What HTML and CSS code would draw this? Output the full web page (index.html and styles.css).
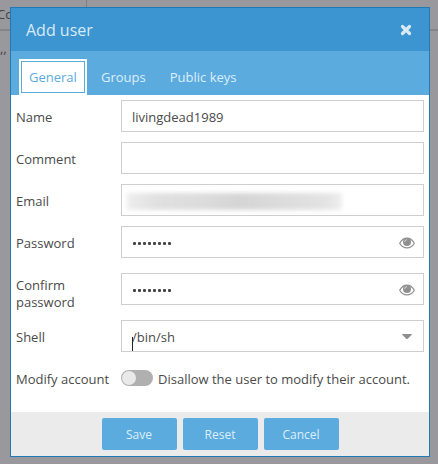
FILE: index.html
```html
<!DOCTYPE html>
<html lang="en">
<head>
<meta charset="utf-8">
<title>Add user</title>
<link rel="stylesheet" href="styles.css">
</head>
<body>
<div class="backdrop">
  <div class="grid-head"><span class="grid-col">Co</span></div>
  <div class="grid-cell">,,</div>
</div>
<div class="dialog">
  <header class="titlebar">
    <h1 class="title">Add user</h1>
    <svg class="close" width="12" height="12" viewBox="0 0 12 12"><path d="M2.5 2.5 9.5 9.5M9.5 2.5 2.5 9.5"/></svg>
  </header>
  <nav class="tabs">
    <div class="tab active"><span class="tab-label">General</span></div>
    <div class="tab">Groups</div>
    <div class="tab">Public keys</div>
  </nav>
  <main class="form">
    <div class="row"><label class="label">Name</label><div class="field">livingdead1989</div></div>
    <div class="row"><label class="label">Comment</label><div class="field"></div></div>
    <div class="row"><label class="label">Email</label><div class="field redacted"><div class="smudge"></div></div></div>
    <div class="row"><label class="label">Password</label><div class="field"><span class="dots"><i></i><i></i><i></i><i></i><i></i><i></i><i></i><i></i></span>
      <svg class="eye" width="16" height="12" viewBox="0 0 16 12"><path class="lid" d="M.7 6.2C2.5 3 5 1.2 8 1.2s5.500 1.800 7.300 5C13.500 9.300 11 10.900 8 10.900S2.500 9.300.7 6.200Z"/><circle class="iris" cx="8" cy="5" r="4"/><path class="glint" d="M5.700 5A2.300 2.300 0 0 1 8 2.700"/></svg></div></div>
    <div class="row tall"><label class="label">Confirm password</label><div class="field"><span class="dots"><i></i><i></i><i></i><i></i><i></i><i></i><i></i><i></i></span>
      <svg class="eye" width="16" height="12" viewBox="0 0 16 12"><path class="lid" d="M.7 6.2C2.5 3 5 1.2 8 1.2s5.500 1.800 7.300 5C13.500 9.300 11 10.900 8 10.900S2.500 9.300.7 6.200Z"/><circle class="iris" cx="8" cy="5" r="4"/><path class="glint" d="M5.700 5A2.300 2.300 0 0 1 8 2.700"/></svg></div></div>
    <div class="row"><label class="label">Shell</label><div class="field select">/bin/sh<span class="caret"></span><svg class="arrow" width="10" height="5" viewBox="0 0 10 5"><path d="M.2 0H9.800Q10 .6 9.500 1L5.700 4.700Q5 5.200 4.300 4.700L.5 1Q0 .6.2 0Z"/></svg></div></div>
    <div class="row"><label class="label">Modify account</label><div class="switch-line"><span class="switch"><span class="knob"></span></span>Disallow the user to modify their account.</div></div>
  </main>
  <footer class="footer">
    <button class="btn">Save</button>
    <button class="btn">Reset</button>
    <button class="btn">Cancel</button>
  </footer>
</div>
</body>
</html>
```
FILE: styles.css
```css
* { box-sizing: border-box; }

body {
  margin: 0;
  height: 464px;
  padding: 7px 8px 7px 10px;
  overflow: hidden;
  background: #98989d;
  color: #4a4a4a;
  font: 13px/17px "Open Sans", sans-serif;
}

.backdrop {
  position: absolute;
  inset: 0;
}

.grid-head {
  height: 31px;
  border-bottom: 2px solid #858589;
}

.grid-col {
  display: block;
  width: 87px;
  height: 29px;
  padding-top: 6px;
  border-right: 1px solid #7f7f83;
  text-indent: -3px;
  color: #424246;
}

.grid-cell {
  padding-top: 9px;
  color: #424246;
}

.dialog {
  position: relative;
  width: 420px;
  height: 450px;
  display: flex;
  flex-direction: column;
  border: 1px solid #1e7ab8;
  background: #fff;
}

.titlebar {
  height: 43px;
  display: flex;
  align-items: center;
  justify-content: space-between;
  padding: 0 17px 0 15px;
  background: #3c95d0;
}

.title {
  margin: 0;
  font-size: 16px;
  line-height: 22px;
  font-weight: 400;
  color: #d8eaf6;
}

.close {
  fill: none;
  stroke: #d8eaf6;
  stroke-width: 3.2;
  stroke-linecap: round;
}

.tabs {
  height: 44px;
  display: flex;
  align-items: flex-end;
  gap: 14px;
  padding-left: 8px;
  background: #5cabdf;
  color: #dceefa;
}

.tab {
  height: 36px;
  padding: 10px 0 0;
}

.tab + .tab { padding-right: 10px; }

.tab.active {
  width: 68px;
  padding: 2px;
  background: #fff;
  color: #5cabdf;
}

.tab-label {
  display: block;
  height: 32px;
  padding: 7px 0 0 7px;
  border: 1px solid #5cabdf;
}

.form {
  flex: 1;
  display: flex;
  flex-direction: column;
  gap: 10px;
  padding: 5px 5px 0;
}

.row {
  display: grid;
  grid-template-columns: 105px 303px;
}

.label {
  padding-top: 9px;
  width: 95px;
}

.field {
  height: 32px;
  display: flex;
  align-items: center;
  justify-content: space-between;
  padding: 2px 8px 0 10px;
  border: 1px solid #cfcfcf;
}

.tall { padding-top: 5px; height: 42px; }
.tall .label { padding-top: 4px; }

.redacted { padding: 3px 0 0 5px; }

.smudge {
  width: 215px;
  height: 17px;
  background: linear-gradient(90deg, #eeeeee, #e0e0e0 14%, #dcdcdc 35%, #d5d5d5 52%, #dddddd 75%, #e3e3e3 92%, #eeeeee);
  filter: blur(2px);
}

.dots {
  display: flex;
  gap: 2px;
  padding: 1px 0 0 1px;
}

.dots i {
  width: 3px;
  height: 3px;
  border-radius: 1px;
  background: #454545;
}

.eye { margin-bottom: 1px; }

.lid {
  fill: none;
  stroke: #909090;
  stroke-width: 1.2;
}

.iris { fill: #909090; }

.glint {
  fill: none;
  stroke: #e4e4e4;
  stroke-width: .8;
}

.select { position: relative; padding-right: 11px; }

.caret {
  position: absolute;
  left: 10px;
  top: 16px;
  width: 1px;
  height: 14px;
  background: #222;
}

.arrow {
  margin-bottom: 2px;
  fill: #8e8e8e;
}

.switch-line {
  height: 34px;
  display: flex;
  align-items: center;
  gap: 5px;
  white-space: nowrap;
}

.switch {
  width: 32px;
  height: 16px;
  margin-bottom: 2px;
  padding: 1px;
  border-radius: 8px;
  background: #b0b0b0;
}

.knob {
  display: block;
  width: 14px;
  height: 14px;
  border-radius: 50%;
  background: #e9e9e9;
}

.footer {
  height: 44px;
  display: flex;
  justify-content: center;
  align-items: center;
  gap: 6px;
  background: #ebebeb;
}

.btn {
  width: 75px;
  height: 32px;
  padding: 1px 0 0;
  border: 0;
  border-radius: 2px;
  background: #5cabdf;
  color: #dceefa;
  font: 12px/17px "Open Sans", sans-serif;
}
```
